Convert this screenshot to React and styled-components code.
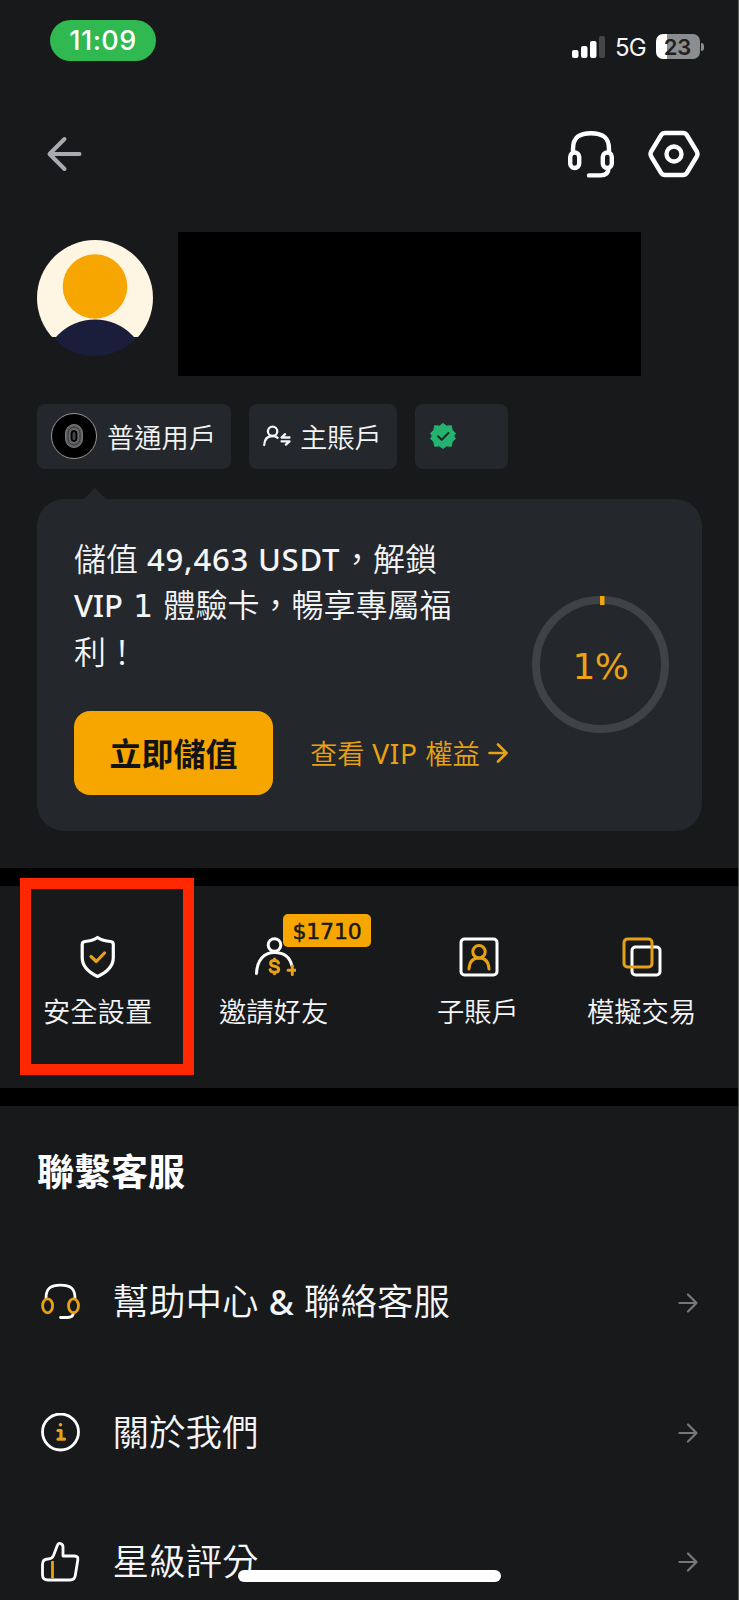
import styled, { createGlobalStyle } from "styled-components";

const GlobalStyle = createGlobalStyle`
  * {
    box-sizing: border-box;
  }

  body {
    margin: 0;
    background: #17191b;
  }

  svg {
    display: block;
    flex: none;
    fill: none;
    stroke-linecap: round;
    stroke-linejoin: round;
  }

  button {
    border: none;
    padding: 0;
    background: none;
    font: inherit;
  }
`;

const Screen = styled.main`
  position: relative;
  width: 739px;
  height: 1600px;
  overflow: hidden;
  background: #17191b;
  border-right: 1px solid #5b5d5c;
  color: #f4f5f7;
  font-family: "Noto Sans", "Noto Sans CJK TC", sans-serif;
  font-weight: 350;
  white-space: nowrap;
`;

/* ---------- status bar ---------- */

const StatusBar = styled.div`
  display: flex;
  justify-content: space-between;
  align-items: flex-start;
  height: 82px;
  padding: 20px 34px 0 50px;
  font-family: Inter, sans-serif;
`;

const Clock = styled.div`
  display: flex;
  align-items: center;
  justify-content: center;
  width: 106px;
  height: 41px;
  border-radius: 21px;
  background: #31b951;
  color: #fff;
  font-size: 27px;
  font-weight: 500;
  letter-spacing: 0.5px;
`;

const StatusIcons = styled.div`
  display: flex;
  align-items: center;
  height: 25px;
  margin-top: 14px;
`;

const Network = styled.span`
  width: 31px;
  margin: 2px 10px 0 9px;
  font-size: 24px;
  font-weight: 400;
  line-height: 24px;
  letter-spacing: -0.8px;
`;

const Battery = styled.div`
  display: flex;
  align-items: center;
  justify-content: center;
  width: 44px;
  height: 25px;
  padding-right: 1px;
  border-radius: 7px;
  background: linear-gradient(to right, #fff 11px, #8c8d8e 11px);
  color: #202123;
  font-size: 22px;
  font-weight: 600;
`;

const BatteryTip = styled.i`
  width: 3px;
  height: 8px;
  margin-left: 1px;
  border-radius: 0 4px 4px 0;
  background: #8c8d8e;
`;

/* ---------- header + profile ---------- */

const Header = styled.header`
  display: flex;
  align-items: center;
  height: 144px;
  padding: 0 37px 0 46px;
`;

const HeaderActions = styled.div`
  display: flex;
  gap: 32px;
  margin-left: auto;
`;

const Profile = styled.section`
  display: flex;
  gap: 25px;
  margin-top: 6px;
  padding-left: 37px;
`;

const Avatar = styled.div`
  margin-top: 8px;
`;

const HiddenName = styled.div`
  width: 463px;
  height: 144px;
  background: #000;
`;

const Chips = styled.div`
  display: flex;
  gap: 18px;
  margin-top: 28px;
  padding-left: 37px;
`;

const Chip = styled.div`
  display: flex;
  align-items: center;
  gap: ${(props) => props.$gap || "0"};
  width: ${(props) => props.$width};
  height: 65px;
  padding: 0 0 1px 14px;
  border-radius: 8px;
  background: #24272b;
  font-size: 27.3px;
`;

const Level = styled.span`
  display: flex;
  align-items: center;
  justify-content: center;
  width: 46px;
  height: 46px;
  margin-right: 10px;
  border: 1.5px solid #98999b;
  border-radius: 50%;
  background: #000;
`;

/* ---------- vip card ---------- */

const VipCard = styled.section`
  position: relative;
  display: flex;
  width: 665px;
  height: 332px;
  margin: 30px 0 0 37px;
  padding: 37px 0 0 37px;
  border-radius: 27px;
  background: #24272b;

  &::before {
    content: "";
    position: absolute;
    top: -11px;
    left: 47px;
    border: 11px solid transparent;
    border-top: none;
    border-bottom-color: #24272b;
  }
`;

const VipBody = styled.div`
  width: 458px;
`;

const VipText = styled.p`
  margin: 0;
  font-size: 32px;
  line-height: 46px;
`;

const Latin = styled.span`
  margin: 0 ${(props) => props.$gap || "0"};
  font-family: ${(props) => (props.$slab ? '"DejaVu Sans"' : '"Noto Sans"')}, sans-serif;
  font-size: ${(props) => props.$size || "0.97em"};
  font-weight: ${(props) => props.$weight || 500};
  letter-spacing: ${(props) => props.$spacing || "0"};
`;

const VipActions = styled.div`
  display: flex;
  align-items: center;
  gap: 37px;
  margin-top: 36px;
`;

const DepositButton = styled.button`
  width: 199px;
  height: 84px;
  padding-bottom: 3px;
  border-radius: 16px;
  background: #f7a600;
  color: #121314;
  font-size: 32px;
  font-weight: 700;
`;

const VipLink = styled.a`
  display: flex;
  align-items: center;
  gap: 8px;
  color: #e9a114;
  font-size: 27.3px;

  span {
    line-height: 36px;
  }
`;

const Ring = styled.div`
  display: grid;
  place-items: center;
  width: 137px;
  height: 137px;
  margin-top: 60px;

  > * {
    grid-area: 1 / 1;
  }
`;

const RingValue = styled.span`
  padding-top: 3px;
  color: #eba315;
  font-family: "DejaVu Sans", sans-serif;
  font-size: 36px;
  font-weight: 400;
  letter-spacing: -0.5px;
`;

/* ---------- shortcuts ---------- */

const Band = styled.div`
  height: 18px;
  margin-top: ${(props) => props.$top || "0"};
  background: #000;
`;

const Shortcuts = styled.nav`
  position: relative;
  display: flex;
  gap: 67px;
  height: 202px;
  padding: 47px 0 0 43px;
`;

const Shortcut = styled.div`
  position: relative;
  width: ${(props) => props.$width};
  font-size: 27.3px;
  line-height: 40px;
`;

const ShortcutIcon = styled.div`
  display: flex;
  align-items: center;
  justify-content: center;
  width: ${(props) => props.$width};
  height: 48px;
  margin-bottom: 11px;
`;

const Reward = styled.span`
  position: absolute;
  top: -19px;
  left: 64px;
  display: flex;
  align-items: center;
  justify-content: center;
  width: 88px;
  height: 33px;
  padding-top: 2px;
  border-radius: 5px;
  background: #f7a600;
  color: #17191b;
  font-family: "DejaVu Sans", sans-serif;
  font-size: 22px;
  font-weight: 400;
  letter-spacing: -0.2px;
  -webkit-text-stroke: 0.5px #17191b;
`;

/* red marker drawn over the first shortcut */
const Marker = styled.div`
  position: absolute;
  top: -8px;
  left: 20px;
  width: 174px;
  height: 197px;
  border: 11.5px solid #ff2800;
`;

/* ---------- support list ---------- */

const Title = styled.h2`
  margin: 39px 0 0 37px;
  color: #fff;
  font-size: 37px;
  font-weight: 700;
  line-height: 54px;
`;

const List = styled.div`
  margin-top: 39px;
`;

const Row = styled.div`
  display: flex;
  align-items: center;
  height: 129.7px;
  padding: 0 40px 0 40px;
  color: #f4f5f7;
  font-size: 36.5px;
`;

const RowIcon = styled.span`
  width: 72.5px;
`;

const RowLabel = styled.span`
  flex: 1;
  padding-bottom: 2px;
  line-height: 54px;
`;

const HomeIndicator = styled.div`
  position: absolute;
  left: 238px;
  bottom: 18px;
  width: 263px;
  height: 12px;
  border-radius: 6px;
  background: #fff;
`;

/* ---------- icons ---------- */

const GOLD = "#e9a114";

const SignalIcon = () => (
  <svg width="34" height="24">
    <rect x="0" y="15" width="6.5" height="8" rx="2" fill="#fff" />
    <rect x="9" y="11" width="6.5" height="12" rx="2" fill="#fff" />
    <rect x="18" y="6" width="6.5" height="17" rx="2" fill="#fff" />
    <rect x="27" y="1" width="6" height="22" rx="2" fill="#454648" />
  </svg>
);

const BackIcon = () => (
  <svg width="38" height="38" viewBox="0 0 38 38" stroke="#a9abb0" strokeWidth="4">
    <path d="M33.500 19H4M18.500 4L3.500 19l15 15" />
  </svg>
);

const SupportIcon = () => (
  <svg width="48" height="50" viewBox="0 0 48 50" stroke="#fff" strokeWidth="4.400">
    <path d="M6 23v-3C6 8 13 4.200 24 4.200S42 8 42 20v3" />
    <rect x="3.200" y="23.500" width="9" height="15.500" rx="4.500" />
    <rect x="35.800" y="23.500" width="9" height="15.500" rx="4.500" />
    <path d="M41.500 39c0 5-3 7.400-8 7.400H22" />
  </svg>
);

const SettingsIcon = () => (
  <svg width="54" height="50" viewBox="0 0 54 50" stroke="#fff" strokeWidth="4.400">
    <path d="M18 4h18q2.500 0 3.800 2l10 16.500q1.400 2.500 0 5L39.800 44q-1.300 2-3.800 2H18q-2.500 0-3.800-2l-10-16.500q-1.400-2.500 0-5L14.200 6Q15.500 4 18 4z" />
    <circle cx="27" cy="25" r="7.500" />
  </svg>
);

const AvatarIcon = () => (
  <svg width="116" height="116" viewBox="0 0 116 116">
    <clipPath id="avatar">
      <circle cx="58" cy="58" r="58" />
    </clipPath>
    <g clipPath="url(#avatar)">
      <path d="M0 0h116v97H0z" fill="#fff5e3" />
      <circle cx="58" cy="132" r="52.500" fill="#1a1e3a" />
      <circle cx="58" cy="46.500" r="32.300" fill="#f7a600" />
    </g>
  </svg>
);

const ZeroIcon = () => (
  <svg width="20" height="26" viewBox="0 0 20 26">
    <rect x="1.500" y="1.500" width="17" height="23" rx="8.500" fill="#626364" stroke="#77787a" />
    <rect x="4" y="4" width="12" height="18" rx="6" stroke="#343536" />
    <rect x="6" y="6.500" width="8" height="13" rx="4" fill="#000" stroke="#77787a" />
    <rect x="8.500" y="9" width="3" height="8" rx="1.500" fill="#444546" />
  </svg>
);

const MainAccountIcon = () => (
  <svg width="28" height="22" viewBox="0 0 28 22" stroke="#f4f5f7" strokeWidth="2.300">
    <circle cx="9.600" cy="6.300" r="4.700" />
    <path d="M1.200 20c.3-5.500 3.300-9 8.400-9 2 0 3.600.5 5 1.800" />
    <path d="M26.500 12.500h-8l3.600-3.300M18.500 16.300h8L22.900 19.600" />
  </svg>
);

const VerifiedIcon = () => (
  <svg width="28" height="28" viewBox="0 0 28 28">
    <path
      d="M14 1.500l3.700 2.600 4.600-.4.900 4.500 3.300 3.100L24.700 14l1.800 2.700-3.300 3.100-.9 4.500-4.600-.4L14 26.500l-3.700-2.600-4.600.4-.9-4.500-3.300-3.100L3.300 14l-1.800-2.700 3.300-3.100.9-4.500 4.600.4z"
      fill="#25b16f"
      stroke="#25b16f"
      strokeWidth="1"
    />
    <path d="M9 14.300l3.700 3.500L19.500 11" stroke="#1c2924" strokeWidth="2" />
  </svg>
);

const ArrowIcon = ({ color, strokeWidth = 2.2 }) => (
  <svg width="20" height="20" viewBox="0 0 20 20" stroke={color} strokeWidth={strokeWidth}>
    <path d="M1.500 10h17M10 1.500l8.500 8.500-8.500 8.500" />
  </svg>
);

const ProgressIcon = () => (
  <svg width="137" height="137" viewBox="0 0 137 137">
    <circle cx="68.500" cy="68.500" r="64.500" stroke="#3f4246" strokeWidth="8" />
    <rect x="68" y="0" width="4.500" height="9" fill="#f0a511" />
  </svg>
);

const ShieldIcon = () => (
  <svg width="36" height="44" viewBox="0 0 36 44" strokeWidth="3.200">
    <path
      d="M17.500 2.500c-4 2.700-8 3.700-12.500 4-2 .2-2.800 1-2.800 3v13C2.200 31 8 37 17.500 41.500 27.500 37 33.300 31 33.300 22.500v-13c0-2-.8-2.800-2.800-3-5-.3-9-1.300-13-4z"
      stroke="#fff"
    />
    <path d="M11 21.500l5.300 5L24.500 18" stroke={GOLD} />
  </svg>
);

const InviteIcon = () => (
  <svg width="44" height="40" viewBox="-2 0 44 40" strokeWidth="3">
    <circle cx="20.500" cy="8" r="6.300" stroke="#fff" />
    <path d="M2.500 36.500C3 23 10 15.500 20.500 15.500c9.500 0 15.500 5 17.500 13.500" stroke="#fff" />
    <g stroke={GOLD}>
      <path d="M24.500 26c-.5-1.700-2-2.500-4-2.500-2.300 0-3.900 1-3.900 2.900 0 4 8.100 1.800 8.100 5.900 0 2-1.800 3-4.200 3-2.300 0-3.900-.8-4.400-2.700M20.500 22v1.500M20.500 35.300v1.500" />
      <path d="M38.300 29v8.500M34 33.200H42" />
    </g>
  </svg>
);

const SubAccountIcon = () => (
  <svg width="40" height="40" viewBox="0 0 40 40" strokeWidth="3">
    <rect x="2" y="2" width="36" height="36" rx="3.500" stroke="#fff" />
    <g stroke={GOLD}>
      <circle cx="20" cy="14.800" r="6.200" />
      <path d="M10 32c.4-7 4-11 10-11s9.600 4 10 11" />
    </g>
  </svg>
);

const DemoIcon = () => (
  <svg width="40" height="40" viewBox="0 0 40 40" strokeWidth="3">
    <rect x="10" y="10" width="28" height="28" rx="3.500" stroke="#fff" />
    <rect x="2" y="2" width="28" height="28" rx="3.500" stroke={GOLD} />
  </svg>
);

const HelpIcon = () => (
  <svg width="40" height="40" viewBox="0 0 40 40" strokeWidth="2.800">
    <path d="M6 15C6 5.500 10.500 2.200 20.500 2.200S35 5.500 35 15M33.500 30c-.5 3.500-2.500 4.500-6 4.500h-7" stroke="#fff" />
    <g stroke={GOLD}>
      <ellipse cx="7.600" cy="22.800" rx="5" ry="7" />
      <ellipse cx="33.500" cy="22.800" rx="5" ry="7" />
    </g>
  </svg>
);

const AboutIcon = () => (
  <svg width="40" height="40" viewBox="0 0 40 40" strokeWidth="2.800">
    <circle cx="20.500" cy="19" r="18" stroke="#fff" />
    <circle cx="20.500" cy="11.700" r="1.800" fill={GOLD} />
    <path d="M18 17.500h3v8.500M18 26.200h6.500" stroke={GOLD} strokeWidth="3.200" />
  </svg>
);

const RateIcon = () => (
  <svg width="40" height="42" viewBox="0 0 40 42" strokeWidth="2.800">
    <path
      d="M2.500 23.500q0-5.500 5.500-5.500 4 0 5.500-3.500l4-10.500c1-3 5.500-1.500 5.500 2v9h11.500q4 0 3.300 4l-2.500 15.500q-.8 4.500-5 4.500H8q-5.500 0-5.500-5z"
      stroke="#fff"
    />
    <path d="M12.500 20v17.500" stroke={GOLD} strokeLinecap="butt" />
  </svg>
);

const supportLinks = [
  {
    id: "help",
    icon: <HelpIcon />,
    label: (
      <>
        幫助中心 <Latin $gap="0.8px" $size="0.93em">&amp;</Latin> 聯絡客服
      </>
    ),
  },
  { id: "about", icon: <AboutIcon />, label: "關於我們" },
  { id: "rate", icon: <RateIcon />, label: "星級評分" },
];

const shortcuts = [
  { label: "安全設置", icon: <ShieldIcon />, width: "109px" },
  { label: "邀請好友", icon: <InviteIcon />, width: "151px", reward: "$1710" },
  { label: "子賬戶", icon: <SubAccountIcon />, width: "83px" },
  { label: "模擬交易", icon: <DemoIcon />, width: "109px" },
];

function App() {
  return (
    <>
      <GlobalStyle />
      <Screen>
        <StatusBar>
          <Clock>11:09</Clock>
          <StatusIcons>
            <SignalIcon />
            <Network>5G</Network>
            <Battery>23</Battery>
            <BatteryTip />
          </StatusIcons>
        </StatusBar>

        <Header>
          <BackIcon />
          <HeaderActions>
            <SupportIcon />
            <SettingsIcon />
          </HeaderActions>
        </Header>

        <Profile>
          <Avatar>
            <AvatarIcon />
          </Avatar>
          <HiddenName />
        </Profile>

        <Chips>
          <Chip $width="194px">
            <Level>
              <ZeroIcon />
            </Level>
            普通用戶
          </Chip>
          <Chip $width="148px" $gap="9px">
            <MainAccountIcon />
            主賬戶
          </Chip>
          <Chip $width="93px">
            <VerifiedIcon />
          </Chip>
        </Chips>

        <VipCard>
          <VipBody>
            <VipText>
              儲值 <Latin $gap="0.7px" $spacing="0.8px">49,463 USDT</Latin>{"\uff0c"}解鎖
              <br />
              <Latin>VIP</Latin> <Latin $slab $gap="2px" $weight={400}>1</Latin> 體驗卡{"\uff0c"}暢享專屬福
              <br />
              利{"\uff01"}
            </VipText>
            <VipActions>
              <DepositButton>立即儲值</DepositButton>
              <VipLink>
                <span>
                  查看 <Latin $gap="0.5px" $size="1.03em" $spacing="0.7px" $weight={400}>VIP</Latin> 權益
                </span>
                <ArrowIcon color={GOLD} strokeWidth={2.6} />
              </VipLink>
            </VipActions>
          </VipBody>
          <Ring>
            <ProgressIcon />
            <RingValue>1%</RingValue>
          </Ring>
        </VipCard>

        <Band $top="37px" />
        <Shortcuts>
          {shortcuts.map((item) => (
            <Shortcut key={item.label} $width={item.width}>
              <ShortcutIcon $width={item.reward ? "109px" : item.width}>{item.icon}</ShortcutIcon>
              {item.label}
              {item.reward && <Reward>{item.reward}</Reward>}
            </Shortcut>
          ))}
          <Marker />
        </Shortcuts>
        <Band />

        <Title>聯繫客服</Title>
        <List>
          {supportLinks.map((link) => (
            <Row key={link.id}>
              <RowIcon>{link.icon}</RowIcon>
              <RowLabel>{link.label}</RowLabel>
              <ArrowIcon color="#77787b" />
            </Row>
          ))}
        </List>

        <HomeIndicator />
      </Screen>
    </>
  );
}

export default App;
